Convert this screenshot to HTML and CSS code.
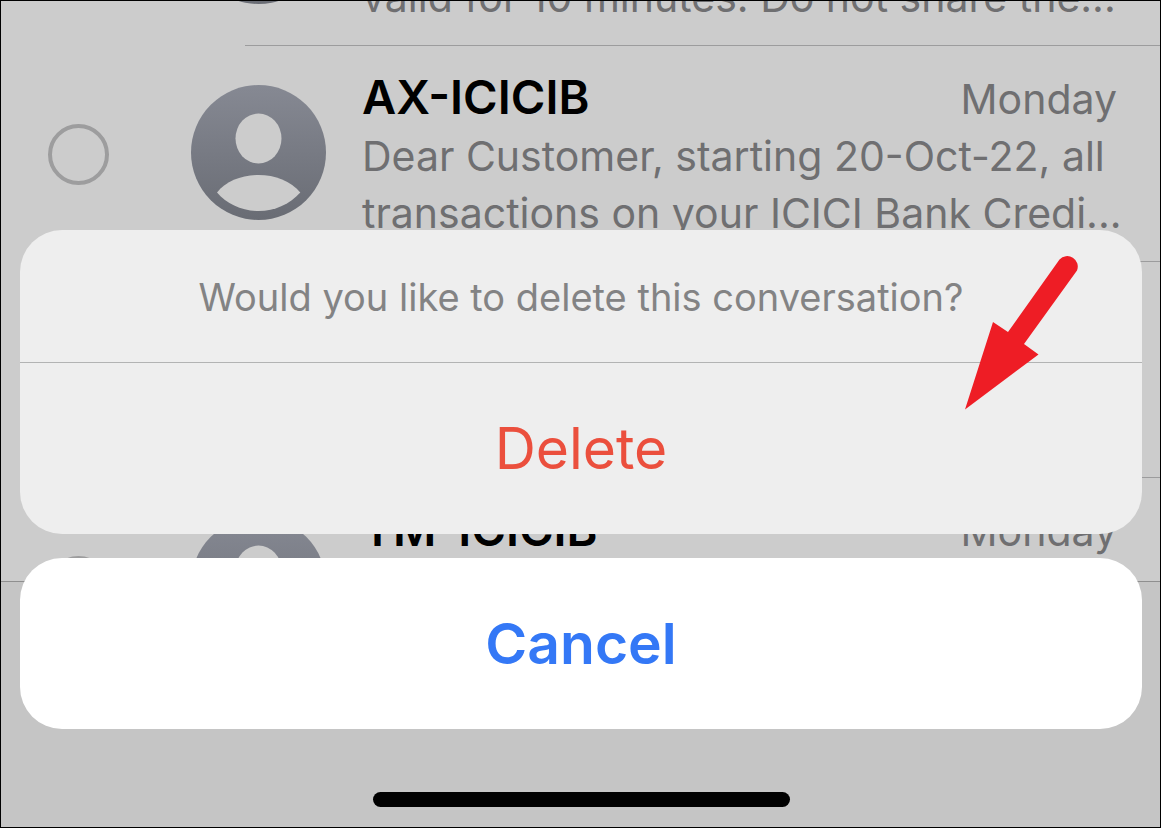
FILE: index.html
```html
<!DOCTYPE html>
<html lang="en">
<head>
    <meta charset="UTF-8">
    <meta name="viewport" content="width=device-width, initial-scale=1.0">
    <title>Messages</title>
    <link rel="stylesheet" href="styles.css">
</head>
<body>
    <!-- shared avatar shape -->
    <svg class="defs" width="0" height="0" aria-hidden="true">
        <defs>
            <linearGradient id="avatar-fill" x1="0" y1="0" x2="0" y2="1">
                <stop offset="0" stop-color="#868993"/>
                <stop offset="1" stop-color="#696c74"/>
            </linearGradient>
        </defs>
        <symbol id="avatar" viewBox="0 0 135 135">
            <circle cx="67.5" cy="67.5" r="67.5" fill="url(#avatar-fill)"/>
            <ellipse cx="67.5" cy="53.5" rx="23" ry="25" fill="#ccc"/>
            <path d="M26 107.500C35 96 51 90 67.500 90S100 96 109.300 107.500C99 119 84 126 67.500 126S36 119 26 107.500Z" fill="#ccc"/>
        </symbol>
    </svg>

    <div class="screen">
        <ul class="messages">
            <li class="message">
                <input type="checkbox" class="select" id="msg-1" aria-label="Select message">
                <svg class="avatar" aria-hidden="true"><use href="#avatar"/></svg>
                <label class="content" for="msg-1">
                    <span class="heading"></span>
                    <span class="preview"><br>valid for 10 minutes. Do not share the...</span>
                </label>
            </li>
            <li class="message">
                <input type="checkbox" class="select" id="msg-2">
                <svg class="avatar" aria-hidden="true"><use href="#avatar"/></svg>
                <label class="content" for="msg-2">
                    <span class="heading"><strong>AX-ICICIB</strong><time>Monday</time></span>
                    <span class="preview">Dear Customer, starting 20-Oct-22, all<br>transactions on your ICICI Bank Credi...</span>
                </label>
            </li>
            <li class="message">
                <input type="checkbox" class="select" id="msg-3" aria-label="Select message">
                <svg class="avatar" aria-hidden="true"><use href="#avatar"/></svg>
                <span class="content"></span>
            </li>
            <li class="message">
                <input type="checkbox" class="select" id="msg-4">
                <svg class="avatar" aria-hidden="true"><use href="#avatar"/></svg>
                <label class="content" for="msg-4">
                    <span class="heading"><strong>TM-ICICIB</strong><time>Monday</time></span>
                </label>
            </li>
        </ul>

        <div class="toolbar"></div>

        <div class="overlay">
            <div class="sheet" role="dialog" aria-labelledby="question">
                <p class="question" id="question">Would you like to delete this conversation?</p>
                <button class="delete">Delete</button>
                <svg class="arrow" viewBox="0 0 114 155" aria-hidden="true">
                    <path d="M0 154.500L28 67L43 77L94.500 4.500A10.500 10.500 0 0 1 112 15.500L59 89L73.500 99.500Z" fill="#ee1d25"/>
                </svg>
            </div>
            <button class="cancel">Cancel</button>
            <div class="home-bar"></div>
        </div>
    </div>
</body>
</html>
```

FILE: styles.css
```css
* {
    box-sizing: border-box;
}

body {
    margin: 0;
    font-family: Inter, "Liberation Sans", Arial, sans-serif;
    background: #ccc;
}

.defs {
    display: block;
}

.screen {
    position: relative;
    height: 100vh;
    border: 1px solid #000;
    background: #ccc;
    overflow: hidden;
}

/* the list is scrolled part way through its first message */
.messages {
    margin: -171px 0 0;
    padding: 0;
    list-style: none;
}

.message {
    display: flex;
    align-items: flex-start;
    height: 216px;
    padding: 22px 43px 0 47px;
    background: linear-gradient(#9c9c9d, #9c9c9d) 244px 100% / 100% 1px no-repeat;
}

.select {
    appearance: none;
    flex: none;
    width: 61px;
    height: 61px;
    margin: 56px 82px 0 0;
    border: 4px solid #9d9d9e;
    border-radius: 50%;
}

.avatar {
    flex: none;
    width: 135px;
    height: 135px;
    margin: 17px 36px 0 0;
}

.content {
    flex: 1;
    min-width: 0;
    font-size: 41px;
    line-height: 57px;
    color: #6f6f71;
}

.heading {
    display: flex;
    justify-content: space-between;
    align-items: baseline;
    height: 60px;
}

.heading strong {
    font-size: 47px;
    font-weight: 600;
    color: #000;
}

.preview {
    display: block;
    white-space: nowrap;
}

.toolbar {
    position: absolute;
    left: 0;
    right: 0;
    bottom: 0;
    height: 246px;
    border-top: 1px solid #8f8f8f;
    background: #c5c5c5;
}

.overlay {
    position: absolute;
    inset: 0;
    display: flex;
    flex-direction: column;
    justify-content: flex-end;
    padding: 0 18px 20px 19px;
}

.sheet {
    position: relative;
    border-radius: 42px;
    background: #eee;
}

.question {
    margin: 0;
    padding: 38px 20px 36px;
    border-bottom: 1px solid #b2b3b3;
    font-size: 38px;
    line-height: 58px;
    text-align: center;
    color: #838384;
}

.delete,
.cancel {
    display: block;
    width: 100%;
    height: 171px;
    border: none;
    padding: 0;
    background: none;
    font-family: inherit;
    font-size: 57px;
    cursor: pointer;
}

.delete {
    color: #eb4f3d;
}

.cancel {
    margin-top: 24px;
    border-radius: 42px;
    background: #fff;
    font-weight: 600;
    color: #3478f6;
}

.arrow {
    position: absolute;
    top: 25px;
    right: 63px;
    width: 114px;
    height: 155px;
}

.home-bar {
    width: 417px;
    height: 15px;
    margin: 63px auto 0;
    border-radius: 8px;
    background: #000;
}
```
